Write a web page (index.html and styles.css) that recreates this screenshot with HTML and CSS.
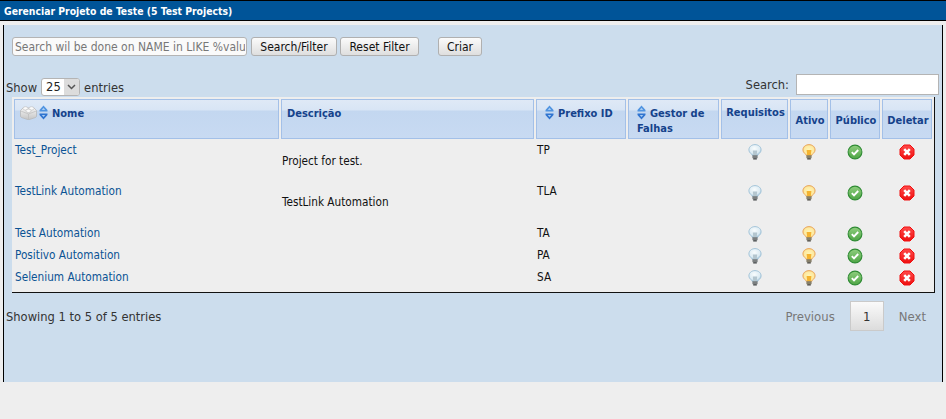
FILE: index.html
```html
<!DOCTYPE html>
<html lang="pt">
<head>
<meta charset="utf-8">
<title>Gerenciar Projeto de Teste</title>
<link rel="stylesheet" href="styles.css">
</head>
<body>
<svg class="defs" width="0" height="0" aria-hidden="true">
  <defs>
    <radialGradient id="gb" cx="0.45" cy="0.35" r="0.7"><stop offset="0" stop-color="#f8fcfd"/><stop offset="0.65" stop-color="#dcebf3"/><stop offset="1" stop-color="#8fb6cf"/></radialGradient>
    <radialGradient id="gy" cx="0.5" cy="0.5" r="0.65"><stop offset="0" stop-color="#fff6b8"/><stop offset="0.6" stop-color="#fde9a0"/><stop offset="1" stop-color="#e8a24a"/></radialGradient>
    <linearGradient id="gg" x1="0" y1="0" x2="0" y2="1"><stop offset="0" stop-color="#8fce7e"/><stop offset="1" stop-color="#4ea545"/></linearGradient>
    <linearGradient id="gr" x1="0" y1="0" x2="0" y2="1"><stop offset="0" stop-color="#ff4a4a"/><stop offset="1" stop-color="#ee1010"/></linearGradient>
    <linearGradient id="gl" x1="0" y1="0" x2="0" y2="1"><stop offset="0" stop-color="#f4f4f4"/><stop offset="1" stop-color="#c4c4c4"/></linearGradient>
    <symbol id="bulb-off" viewBox="0 0 16 16">
      <path d="M8 .6C4.6.6 1.900 2.900 1.900 5.800c0 2 1.300 3.300 2.600 4.300.6.5.8 1 .9 1.500h5.200c.1-.5.3-1 .9-1.500 1.300-1 2.600-2.300 2.600-4.300C14.100 2.900 11.400.6 8 .6z" fill="url(#gb)" stroke="#9cc0d6" stroke-width=".9"/>
      <path d="M5.800 6.500h4.400l-.5 4.900H6.300z" fill="#b4c6cf"/>
      <rect x="5.400" y="11.200" width="5.200" height="3" fill="#7b7f80"/>
      <rect x="6.200" y="14.200" width="3.600" height="1.300" fill="#3f4344"/>
    </symbol>
    <symbol id="bulb-on" viewBox="0 0 16 16">
      <path d="M8 .6C4.6.6 1.900 2.900 1.900 5.800c0 2 1.300 3.300 2.600 4.300.6.5.8 1 .9 1.500h5.200c.1-.5.3-1 .9-1.500 1.300-1 2.600-2.300 2.600-4.300C14.100 2.900 11.400.6 8 .6z" fill="url(#gy)" stroke="#e9a458" stroke-width=".9"/>
      <path d="M5.600 6h4.800l-.6 5.400H6.200z" fill="#f5b32f"/>
      <rect x="5.400" y="11.200" width="5.200" height="3" fill="#87806a"/>
      <rect x="6.200" y="14.200" width="3.600" height="1.300" fill="#434038"/>
    </symbol>
    <symbol id="ok" viewBox="0 0 16 16">
      <circle cx="8" cy="8" r="6.900" fill="url(#gg)" stroke="#2f8b34" stroke-width="1.100"/>
      <path d="M4.800 8.200l2.200 2.200 4.200-4.400" fill="none" stroke="#fff" stroke-width="1.900"/>
    </symbol>
    <symbol id="del" viewBox="0 0 16 16">
      <path d="M5 1h6l4 4v6l-4 4H5l-4-4V5z" fill="url(#gr)" stroke="#f01010" stroke-width="1"/>
      <path d="M5.200 5.200l5.600 5.600M10.800 5.200l-5.600 5.600" stroke="#fff" stroke-width="2.600"/>
    </symbol>
    <symbol id="sort" viewBox="0 0 9 15">
      <path d="M4.500 .5L8.500 5v1.500H.5V5z" fill="#4f93e0"/>
      <path d="M.5 8.500h8V10l-4 4.500-4-4.500z" fill="#2f74d0"/>
      <path d="M4.500 2.800L6.200 5H2.800z" fill="#a9cdf3"/>
      <path d="M2.800 10h3.400l-1.700 2z" fill="#a9cdf3"/>
    </symbol>
    <symbol id="brick" viewBox="0 0 17 15">
      <path d="M3 3h11l2.500 2.500v5.500q0 1-1 1.500L9.500 14.500q-1 .4-2 0L1.500 12.500q-1-.5-1-1.500V5.500z" fill="url(#gl)" stroke="#b4b4b4" stroke-width=".7"/>
      <path d="M.8 6l7.700 3 7.700-3M8.500 9v5.300" fill="none" stroke="#bcbcbc" stroke-width=".7"/>
      <ellipse cx="5.500" cy="3.400" rx="2.600" ry="1.700" fill="#fafafa" stroke="#bdbdbd" stroke-width=".6"/>
      <ellipse cx="11.500" cy="3.400" rx="2.600" ry="1.700" fill="#fafafa" stroke="#bdbdbd" stroke-width=".6"/>
      <ellipse cx="8.500" cy="5.800" rx="2.600" ry="1.700" fill="#fafafa" stroke="#bdbdbd" stroke-width=".6"/>
    </symbol>
  </defs>
</svg>

<h1 class="titlebar">Gerenciar Projeto de Teste (5 Test Projects)</h1>

<main class="panel">
  <form class="toolbar">
    <input class="filter" type="text" placeholder="Search wil be done on NAME in LIKE %value%">
    <button class="btn btn-search" type="button">Search/Filter</button>
    <button class="btn btn-reset" type="button">Reset Filter</button>
    <button class="btn btn-create" type="button">Criar</button>
  </form>

  <div class="dt-top">
    <label class="dt-length">Show
      <span class="select"><span class="select-val">25</span><span class="select-arrow"><svg width="9" height="6" viewBox="0 0 9 6"><path d="M1 1l3.500 3.500L8 1" fill="none" stroke="#555" stroke-width="1.500"/></svg></span></span>
      entries</label>
    <label class="dt-search">Search:<input class="dt-input" type="text"></label>
  </div>

  <table class="grid">
    <colgroup>
      <col class="c-name"><col class="c-desc"><col class="c-prefix"><col class="c-issue"><col class="c-req"><col class="c-act"><col class="c-pub"><col class="c-del">
    </colgroup>
    <thead>
      <tr>
        <th class="th-left"><svg class="brick" width="17" height="15"><use href="#brick"/></svg><svg class="sort" width="9" height="15"><use href="#sort"/></svg>Nome</th>
        <th class="th-desc">Descrição</th>
        <th class="th-left th-pad"><svg class="sort" width="9" height="15"><use href="#sort"/></svg>Prefixo ID</th>
        <th class="th-issue"><svg class="sort" width="9" height="15"><use href="#sort"/></svg>Gestor de<br>Falhas</th>
        <th class="th-req">Requisitos</th>
        <th class="th-mid">Ativo</th>
        <th class="th-mid">Público</th>
        <th class="th-mid">Deletar</th>
      </tr>
    </thead>
    <tbody>
      <tr class="tall">
        <td><a href="#">Test_Project</a></td>
        <td class="desc"><p>Project for test.</p></td>
        <td>TP</td><td></td>
        <td class="ic"><svg width="16" height="16"><use href="#bulb-off"/></svg></td>
        <td class="ic"><svg width="16" height="16"><use href="#bulb-on"/></svg></td>
        <td class="ic"><svg width="16" height="16"><use href="#ok"/></svg></td>
        <td class="ic"><svg width="16" height="16"><use href="#del"/></svg></td>
      </tr>
      <tr class="tall tall-next">
        <td><a href="#">TestLink Automation</a></td>
        <td class="desc"><p>TestLink Automation</p></td>
        <td>TLA</td><td></td>
        <td class="ic"><svg width="16" height="16"><use href="#bulb-off"/></svg></td>
        <td class="ic"><svg width="16" height="16"><use href="#bulb-on"/></svg></td>
        <td class="ic"><svg width="16" height="16"><use href="#ok"/></svg></td>
        <td class="ic"><svg width="16" height="16"><use href="#del"/></svg></td>
      </tr>
      <tr>
        <td><a href="#">Test Automation</a></td>
        <td></td>
        <td>TA</td><td></td>
        <td class="ic"><svg width="16" height="16"><use href="#bulb-off"/></svg></td>
        <td class="ic"><svg width="16" height="16"><use href="#bulb-on"/></svg></td>
        <td class="ic"><svg width="16" height="16"><use href="#ok"/></svg></td>
        <td class="ic"><svg width="16" height="16"><use href="#del"/></svg></td>
      </tr>
      <tr>
        <td><a href="#">Positivo Automation</a></td>
        <td></td>
        <td>PA</td><td></td>
        <td class="ic"><svg width="16" height="16"><use href="#bulb-off"/></svg></td>
        <td class="ic"><svg width="16" height="16"><use href="#bulb-on"/></svg></td>
        <td class="ic"><svg width="16" height="16"><use href="#ok"/></svg></td>
        <td class="ic"><svg width="16" height="16"><use href="#del"/></svg></td>
      </tr>
      <tr class="last">
        <td><a href="#">Selenium Automation</a></td>
        <td></td>
        <td>SA</td><td></td>
        <td class="ic"><svg width="16" height="16"><use href="#bulb-off"/></svg></td>
        <td class="ic"><svg width="16" height="16"><use href="#bulb-on"/></svg></td>
        <td class="ic"><svg width="16" height="16"><use href="#ok"/></svg></td>
        <td class="ic"><svg width="16" height="16"><use href="#del"/></svg></td>
      </tr>
    </tbody>
  </table>

  <div class="dt-bottom">
    <div class="dt-info">Showing 1 to 5 of 5 entries</div>
    <nav class="pager">
      <span class="pg">Previous</span>
      <span class="pg pg-current">1</span>
      <span class="pg">Next</span>
    </nav>
  </div>
</main>
</body>
</html>
```
FILE: styles.css
```css
* { box-sizing: border-box; }
html, body { margin: 0; padding: 0; }
body {
  width: 946px;
  height: 419px;
  overflow: hidden;
  background: #eeeeee;
  font-family: "DejaVu Sans", sans-serif;
  font-stretch: condensed;
  font-size: 12.8px;
  color: #333333;
}
.defs { position: absolute; }

.titlebar {
  margin: 0;
  height: 21px;
  padding: 3px 0 0 4px;
  background: #005498;
  border-top: 1px solid #000;
  border-bottom: 1px solid #000;
  color: #ffffff;
  font-size: 10.35px;
  font-weight: bold;
  line-height: 14px;
}

.panel {
  margin: 4px 3px 0;
  height: 357px;
  background: #ccdded;
  border-left: 1px solid #000;
  border-right: 1px solid #000;
  padding: 12px 0 0 2px;
}

.toolbar { display: flex; height: 19px; padding-left: 6px; }
.filter {
  width: 235px;
  height: 19px;
  padding: 0 1px 0 2px;
  border: 1px solid #b4b4b4;
  border-radius: 3px;
  background: #fafafa;
  font: condensed 12px "DejaVu Sans", sans-serif;
}
.filter::placeholder { color: #777777; opacity: 1; }
.btn {
  height: 19px;
  padding: 0;
  border: 1px solid #b0b0b0;
  border-radius: 3px;
  background: linear-gradient(#fbfbfb, #dedede);
  color: #111111;
  font: condensed 12px "DejaVu Sans", sans-serif;
}
.btn-search { width: 86px; margin-left: 4px; }
.btn-reset { width: 79px; margin-left: 3px; }
.btn-create { width: 44px; margin-left: 19px; }

.dt-top {
  display: flex;
  justify-content: space-between;
  align-items: flex-end;
  margin-top: 18px;
  height: 23px;
}
.dt-length, .dt-search { display: flex; align-items: center; }
.dt-length { height: 18px; gap: 4px; margin-bottom: 1px; }
.select {
  display: inline-flex;
  width: 39px;
  height: 18px;
  border: 1px solid #b4b4b4;
  border-radius: 3px;
  background: #fff;
  overflow: hidden;
  color: #222;
  line-height: 16px;
}
.select-val { width: 22px; padding-left: 4px; }
.select-arrow {
  width: 15px;
  background: #dcdcdc;
  display: flex;
  align-items: center;
  justify-content: center;
}
.dt-search { gap: 7px; margin-right: 3px; height: 22px; margin-bottom: 2px; }
.dt-input {
  width: 143px;
  height: 21px;
  border: 1px solid #b4b4b4;
  background: #fff;
  padding: 0;
}

.grid {
  width: 923px;
  margin: 0 0 0 6px;
  table-layout: fixed;
  border-collapse: separate;
  border-spacing: 2px;
  background: #eeeeee;
  border-right: 1px solid #111;
  border-bottom: 1px solid #111;
  color: #111111;
  font-size: 11.7px;
  line-height: 15px;
}
.c-name { width: 265px; }
.c-desc { width: 253px; }
.c-prefix { width: 90px; }
.c-issue { width: 91px; }
.c-req { width: 67px; }
.c-act { width: 38px; }
.c-pub { width: 50px; }
.c-del { width: 50px; }

.grid thead { background: #dfeaf6; }
.grid th {
  height: 40px;
  padding: 1px 3px;
  border: 1px solid #a3c0e8;
  background: linear-gradient(#dfe9f6 0, #d8e5f5 10px, #c3d7f0 11px, #c8daf2 100%);
  color: #15428b;
  font-size: 11px;
  font-weight: bold;
  line-height: 15px;
  vertical-align: middle;
  text-align: center;
}
.grid th.th-left, .grid th.th-desc, .grid th.th-issue, .grid th.th-req { vertical-align: top; padding-top: 5px; }
.grid th.th-left, .grid th.th-desc, .grid th.th-issue { text-align: left; }
.grid th.th-left { padding-left: 5px; }
.grid th.th-desc { padding-left: 5px; padding-top: 6px; }
.grid th.th-pad { padding-left: 8px; }
.grid th.th-issue { padding-left: 8px; }
.grid th.th-req { padding-left: 2px; padding-right: 0; }
.grid th.th-mid { padding: 3px 0 1px 2px; }
.brick { vertical-align: -3px; margin-right: 2px; }
.sort { vertical-align: -3px; margin-right: 4px; }

.grid td {
  padding: 2px 1px 1px;
  vertical-align: top;
  height: 20px;
}
.grid .tall td { height: 39px; }
.grid .tall-next td { height: 40px; }
.grid .last td { height: 22px; }
.grid td.desc p { margin: 11px 0 0; }
.grid td.ic { text-align: center; padding-top: 2px; }
.grid .tall td.ic { padding-top: 3px; }
.grid td.ic svg { display: block; margin: 0 auto; }
.grid a { color: #0b5394; text-decoration: none; }

.dt-bottom {
  display: flex;
  justify-content: space-between;
  align-items: flex-start;
  margin-top: 8px;
}
.dt-info { margin-top: 8px; }
.pager { display: flex; align-items: center; margin-right: 1px; color: #777777; font-size: 13px; }
.pg { padding: 0 15px; }
.pg-current {
  display: flex;
  align-items: center;
  justify-content: center;
  width: 34px;
  height: 30px;
  padding: 0;
  border: 1px solid #cacaca;
  background: linear-gradient(#fafafa, #dcdcdc);
  color: #333333;
}
```
